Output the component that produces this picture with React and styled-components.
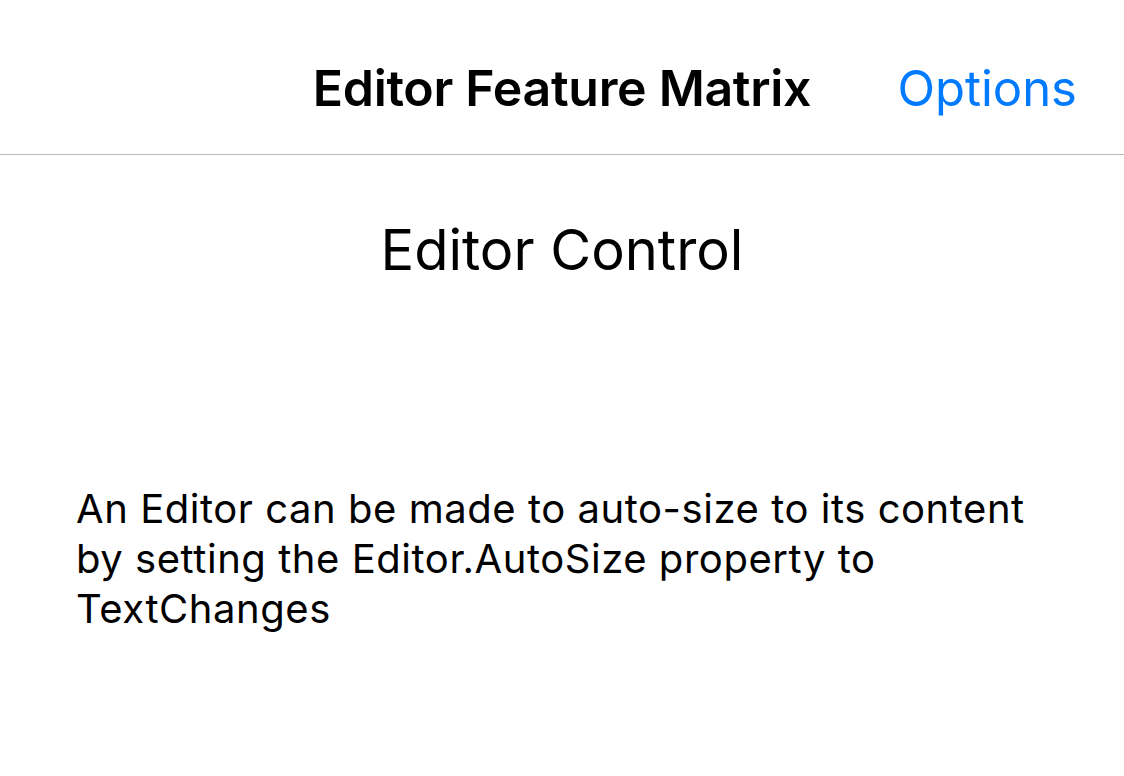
import styled, { createGlobalStyle } from "styled-components"

const Global = createGlobalStyle`
  html, body {
    margin: 0;
    padding: 0;
    background: #ffffff;
  }
  body {
    font-family: Inter, "Noto Sans", "Liberation Sans", sans-serif;
    color: #000;
  }
`

const NavBar = styled.header`
  position: relative;
  height: 155px;
  border-bottom: 1px solid #b9b9b9;
  display: flex;
  align-items: flex-end;
  justify-content: center;
  padding-bottom: 41px;
  box-sizing: border-box;
`

const NavTitle = styled.h1`
  margin: 0;
  font-size: 50px;
  font-weight: 600;
  letter-spacing: -0.3px;
  line-height: 1;
`

const NavAction = styled.button`
  position: absolute;
  right: 47px;
  bottom: 41px;
  border: 0;
  background: none;
  padding: 0;
  font-family: inherit;
  font-size: 49px;
  font-weight: 400;
  color: #007aff;
  line-height: 1;
  cursor: pointer;
`

const Content = styled.main`
  display: flex;
  flex-direction: column;
  padding: 0 76px;
`

const Heading = styled.h2`
  margin: 62px 0 0;
  text-align: center;
  font-size: 56px;
  font-weight: 400;
  line-height: 1.2;
`

const Description = styled.p`
  margin: 200px 0 0;
  font-size: 40px;
  line-height: 50px;
  letter-spacing: 0.55px;
  font-weight: 400;
`

export default function App() {
  return (
    <>
      <Global />
      <NavBar>
        <NavTitle>Editor Feature Matrix</NavTitle>
        <NavAction>Options</NavAction>
      </NavBar>
      <Content>
        <Heading>Editor Control</Heading>
        <Description>
          An Editor can be made to auto-size to its content by setting the
          Editor.AutoSize property to TextChanges
        </Description>
      </Content>
    </>
  )
}
